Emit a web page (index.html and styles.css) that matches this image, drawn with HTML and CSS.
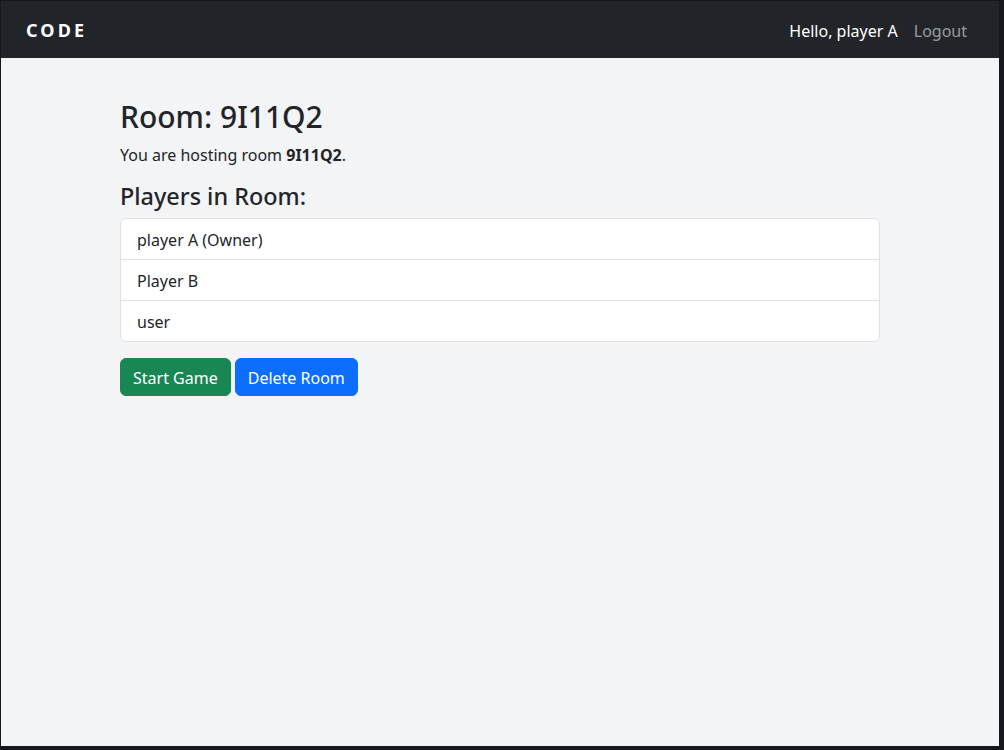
FILE: index.html
```html
<!DOCTYPE html>
<html lang="en">
<head>
<meta charset="utf-8">
<title>Room</title>
<link rel="stylesheet" href="styles.css">
</head>
<body>
<div class="frame">
  <nav class="navbar">
    <span class="brand">CODE</span>
    <div class="nav-right">
      <span class="hello">Hello, player A</span>
      <a class="logout" href="#">Logout</a>
    </div>
  </nav>
  <main class="main">
    <h2 class="title">Room: 9I11Q2</h2>
    <p class="info">You are hosting room <strong>9I11Q2</strong>.</p>
    <h4 class="subtitle">Players in Room:</h4>
    <ul class="list">
      <li class="list-item">player A (Owner)</li>
      <li class="list-item">Player B</li>
      <li class="list-item">user</li>
    </ul>
    <div class="actions">
      <button class="btn btn-green">Start Game</button>
      <button class="btn btn-blue">Delete Room</button>
    </div>
  </main>
</div>
</body>
</html>
```
FILE: styles.css
```css
html, body {
  margin: 0;
  padding: 0;
  background: #15181d;
}
body {
  font-family: "Noto Sans", "Open Sans", sans-serif;
  color: #212529;
  font-size: 16px;
  line-height: 1.5;
}
.frame {
  width: 998px;
  height: 745px;
  margin: 1px 0 0 1px;
  background: #f3f4f6;
  display: flex;
  flex-direction: column;
}
.navbar {
  height: 57px;
  background: #212529;
  display: flex;
  align-items: center;
  justify-content: space-between;
  padding: 2px 32px 0 25px;
  box-sizing: border-box;
}
.brand {
  color: #fff;
  font-weight: 700;
  font-size: 18px;
  letter-spacing: 3.1px;
}
.nav-right {
  display: flex;
  gap: 16px;
  align-items: center;
}
.hello {
  color: #fff;
}
.logout {
  color: rgba(255, 255, 255, 0.55);
  text-decoration: none;
}
.main {
  width: 760px;
  margin: 0 auto;
  padding-top: 41px;
}
.title {
  font-size: 30px;
  font-weight: 500;
  line-height: 1.2;
  margin: 0 0 8px;
}
.info {
  margin: 0 0 15px;
}
.info strong {
  font-weight: 700;
}
.subtitle {
  font-size: 23.4px;
  font-weight: 500;
  line-height: 1.2;
  margin: 0 0 8px;
}
.list {
  list-style: none;
  margin: 0 0 16px;
  padding: 0;
  background: #fff;
  border: 1px solid #dee2e6;
  border-radius: 6px;
}
.list-item {
  padding: 9px 16px 7px;
  border-top: 1px solid #dee2e6;
}
.list-item:first-child {
  border-top: none;
}
.actions {
  display: flex;
  gap: 4px;
}
.btn {
  font-family: inherit;
  font-size: 16px;
  line-height: 1.5;
  padding: 7px 12px 5px;
  border: 1px solid transparent;
  border-radius: 6px;
  color: #fff;
}
.btn-green {
  background: #198754;
  border-color: #198754;
}
.btn-blue {
  background: #0d6efd;
  border-color: #0d6efd;
}
```
